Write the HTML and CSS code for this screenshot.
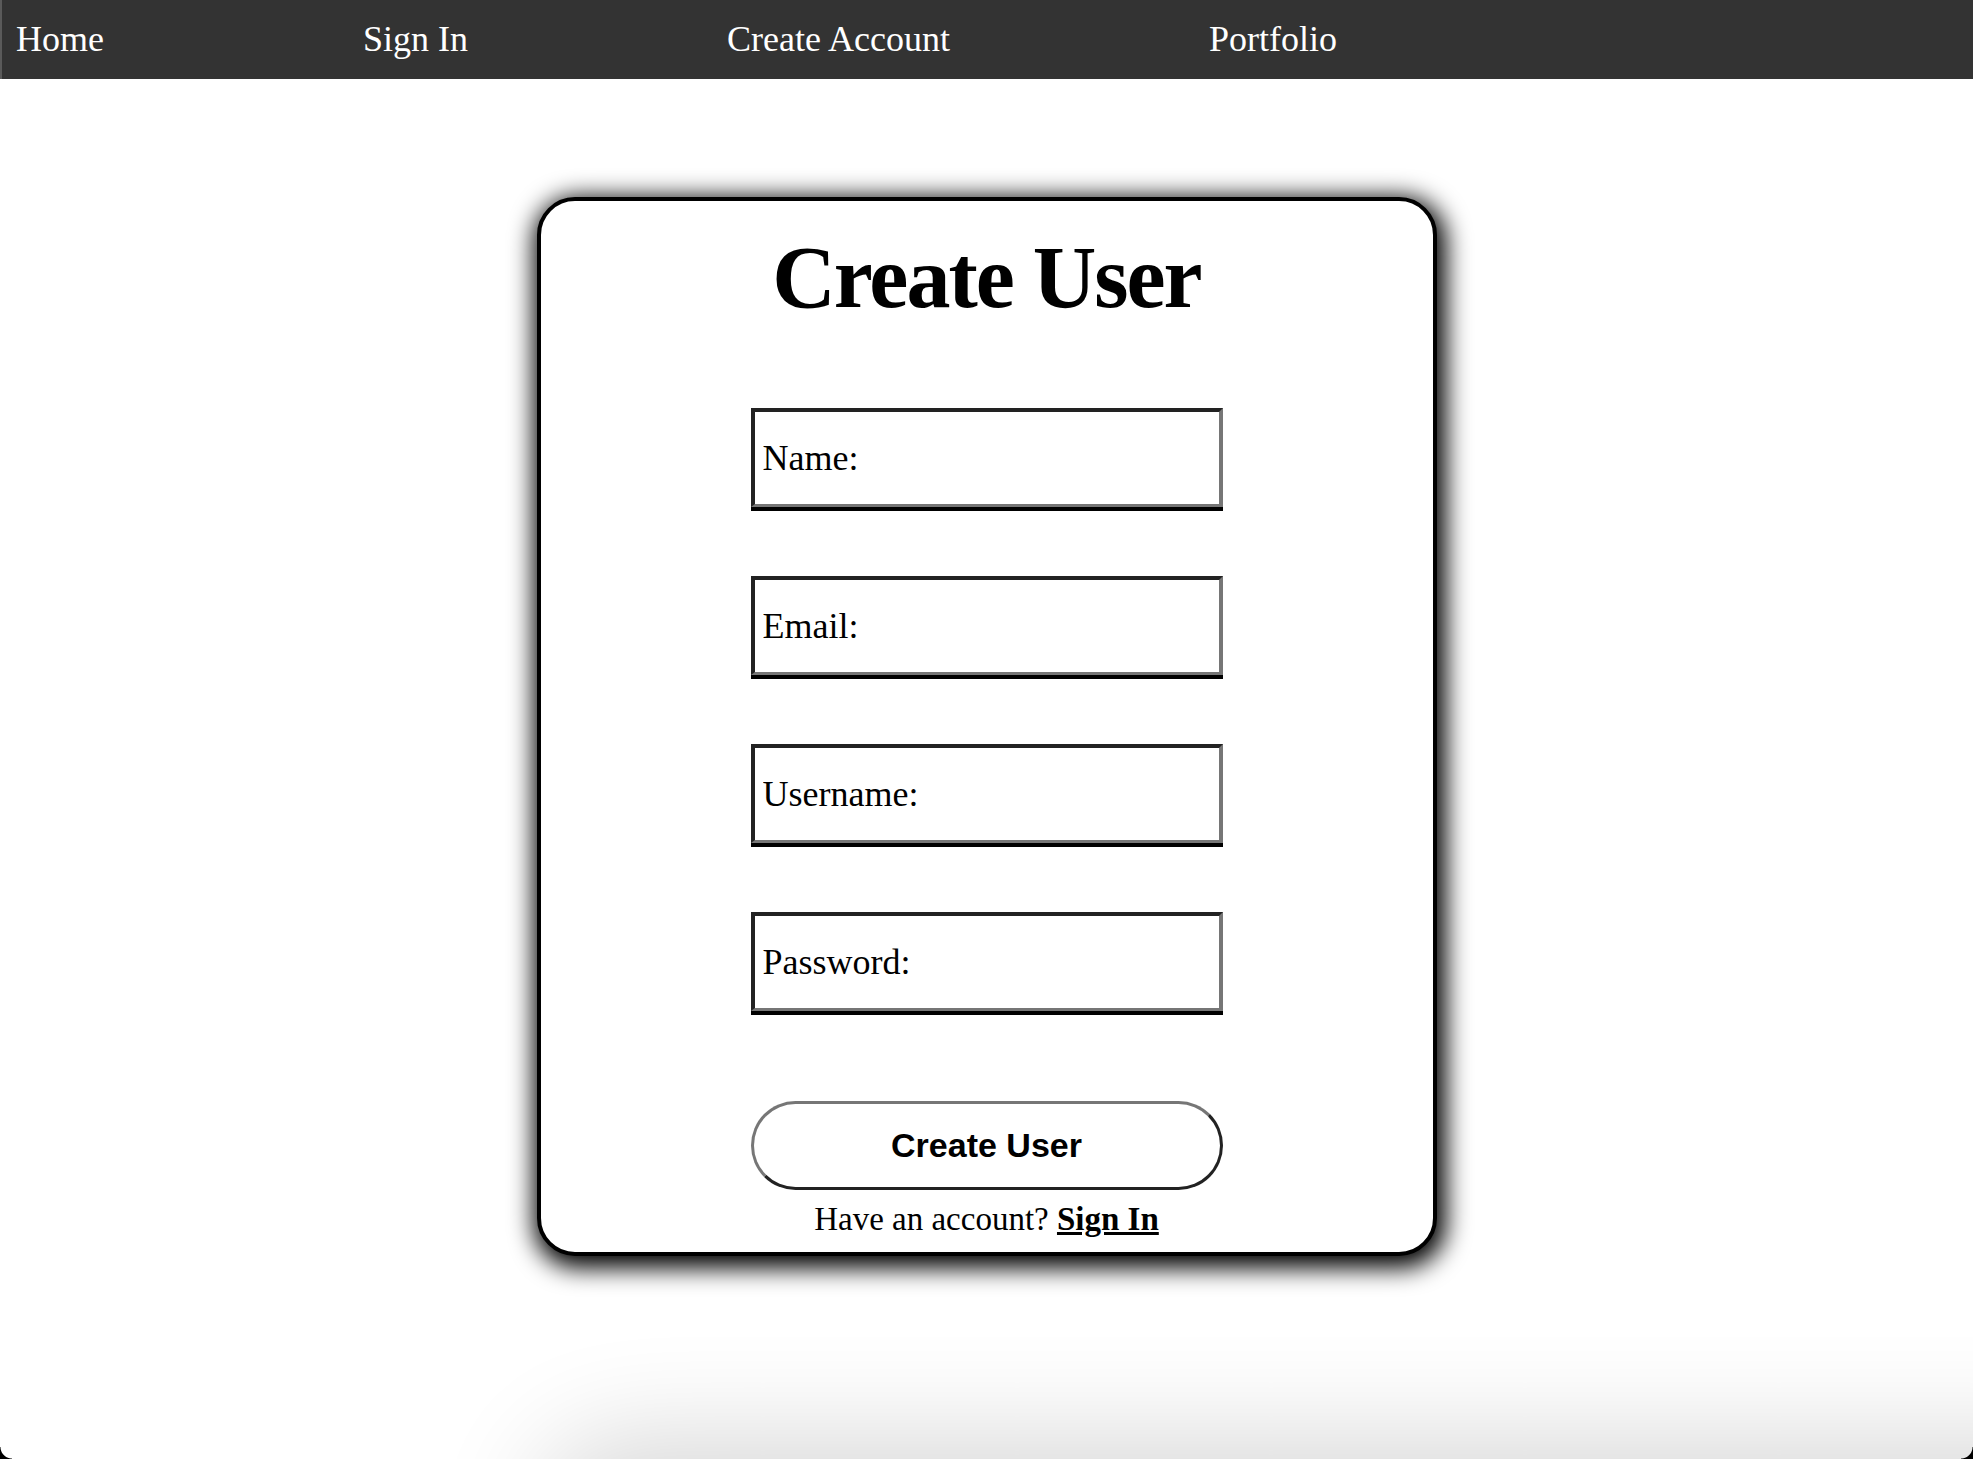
FILE: index.html
```html
<!DOCTYPE html>
<html lang="en">
<head>
<meta charset="utf-8">
<title>Create User</title>
<link rel="stylesheet" href="styles.css">
</head>
<body>
<div class="viewport">
  <nav class="topnav">
    <a class="nav-link" href="#">Home</a>
    <a class="nav-link" href="#">Sign In</a>
    <a class="nav-link" href="#">Create Account</a>
    <a class="nav-link" href="#">Portfolio</a>
  </nav>
  <main class="main">
    <form class="card">
      <h1 class="card-title">Create User</h1>
      <div class="fields">
        <input class="field" type="text" placeholder="Name:">
        <input class="field" type="email" placeholder="Email:">
        <input class="field" type="text" placeholder="Username:">
        <input class="field" type="password" placeholder="Password:">
      </div>
      <button class="submit" type="button">Create User</button>
      <p class="switch">Have an account? <a class="switch-link" href="#">Sign In</a></p>
    </form>
  </main>
  <div class="bottom-shade"></div>
  <div class="corner corner-left"></div>
  <div class="corner corner-right"></div>
</div>
</body>
</html>
```

FILE: styles.css
```css
html, body {
  margin: 0;
  padding: 0;
  background: #ffffff;
}

.viewport {
  position: relative;
  height: 100vh;
  overflow: hidden;
  font-family: "Liberation Serif", "Times New Roman", serif;
  color: #000;
}

.topnav {
  height: 79px;
  background: #333333;
  display: flex;
  align-items: center;
  gap: 259px;
  padding-left: 14px;
  border-left: 2px solid #5a5a5a;
}

.nav-link {
  color: #ffffff;
  text-decoration: none;
  font-size: 36px;
  line-height: 41px;
}

.main {
  padding-top: 118px;
}

.card {
  box-sizing: border-box;
  width: 900px;
  height: 1059px;
  margin: 0 auto;
  border: 4px solid #000;
  border-radius: 38px;
  background: #fff;
  box-shadow: 3px 6px 24px 6px #000;
  display: flex;
  flex-direction: column;
  align-items: center;
  padding-top: 26px;
}

.card-title {
  margin: 0;
  font-size: 88px;
  letter-spacing: -2px;
  font-weight: bold;
  line-height: 101px;
}

.fields {
  display: flex;
  flex-direction: column;
  gap: 69px;
  margin-top: 80px;
}

.field {
  box-sizing: border-box;
  width: 472px;
  height: 99px;
  margin: 0;
  padding: 0 8px;
  border-width: 4px 4px 3px 4px;
  border-style: solid;
  border-color: #222 #767676 #767676 #222;
  box-shadow: 0 4px 0 #000;
  background: #fff;
  font-family: "Liberation Serif", "Times New Roman", serif;
  font-size: 36px;
  color: #000;
  outline: none;
}

.field::placeholder {
  color: #000;
  opacity: 1;
}

.submit {
  box-sizing: border-box;
  width: 472px;
  height: 89px;
  margin-top: 90px;
  border-width: 3px;
  border-style: solid;
  border-color: #767676 #222 #222 #767676;
  border-radius: 45px;
  background: #fff;
  font-family: "Liberation Sans", Arial, sans-serif;
  font-weight: bold;
  font-size: 34px;
  color: #000;
  cursor: pointer;
}

.switch {
  margin: 10px 0 0;
  font-size: 33px;
  line-height: 38px;
}

.switch-link {
  color: #000;
  font-weight: bold;
  text-decoration: underline;
}

.bottom-shade {
  position: absolute;
  left: 560px;
  right: -200px;
  top: 100%;
  height: 200px;
  box-shadow: 0 0 110px 20px rgba(0, 0, 0, 0.16);
  border-radius: 60px;
}

.corner {
  position: absolute;
  bottom: 0;
  width: 12px;
  height: 12px;
}

.corner-left {
  left: 0;
  background: radial-gradient(circle at 100% 0, transparent 11px, #000 12px);
}

.corner-right {
  right: 0;
  background: radial-gradient(circle at 0 0, transparent 11px, #000 12px);
}
```
